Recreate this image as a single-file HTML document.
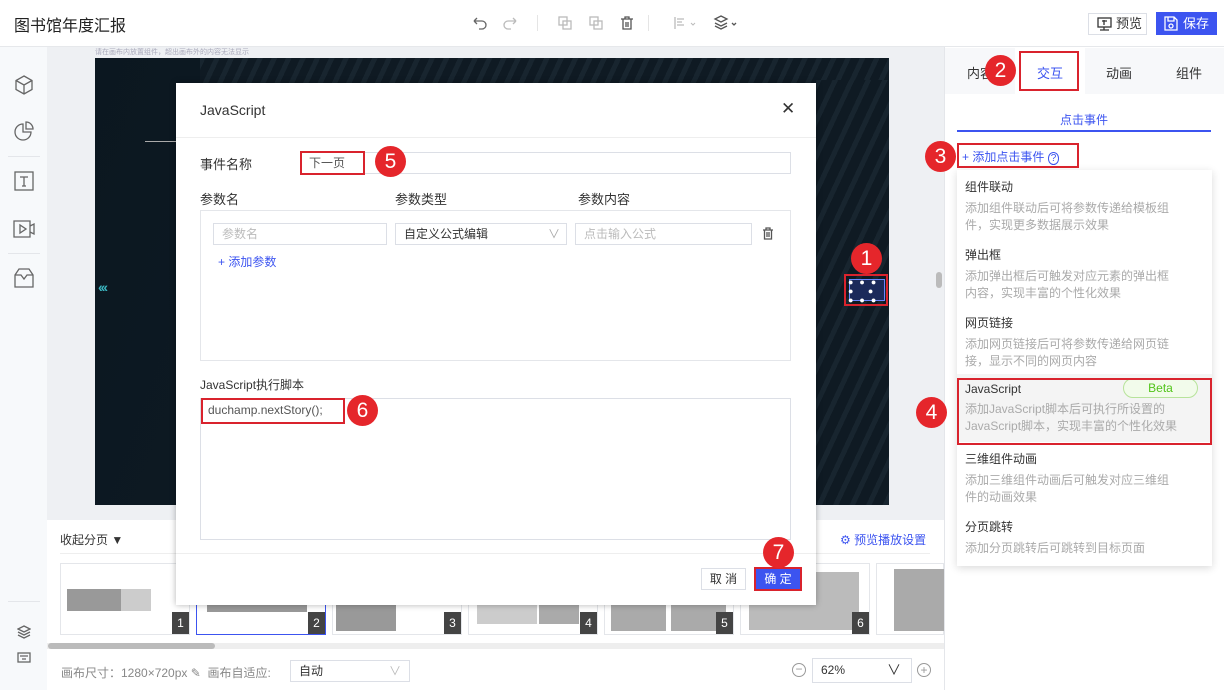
<!DOCTYPE html>
<html><head><meta charset="utf-8"><style>
*{box-sizing:border-box;margin:0;padding:0}
body{width:1224px;height:690px;overflow:hidden;position:relative;font-family:"Liberation Sans","Noto Sans CJK SC",sans-serif;font-size:12px;color:#333;background:#eef0f3}
.a{position:absolute}
.m{position:absolute;width:31px;height:31px;border-radius:50%;background:#e5262b;color:#fff;font-size:21px;text-align:center;line-height:31px;font-family:"Liberation Sans",sans-serif}
.r{position:absolute;border:2px solid #d9232d}
.ic{position:absolute;stroke:#666;fill:none;stroke-width:1.3}
.inp{position:absolute;border:1px solid #dcdfe6;background:#fff;height:22px;line-height:20px;padding-left:8px;color:#bbb;font-size:12px}
.dt{font-size:12px;color:#333;margin-bottom:5px}
.dd{font-size:12px;color:#aaa;line-height:17px}
.it{padding:8px 36px 6px 8px;height:68px}
</style></head><body>
<div class="a" style="left:0;top:0;width:1224px;height:47px;background:#fff;border-bottom:1px solid #e6e8eb"></div>
<div class="a" style="left:14px;top:12px;font-size:16px;color:#222">图书馆年度汇报</div>
<svg class="ic" style="left:470px;top:15px" width="18" height="16"><path d="M4 6h8a4 4 0 010 8H9M4 6l3-3M4 6l3 3"/></svg>
<svg class="ic" style="left:502px;top:15px;stroke:#bbb" width="18" height="16"><path d="M14 6H6a4 4 0 000 8h3M14 6l-3-3M14 6l-3 3"/></svg>
<div class="a" style="left:537px;top:15px;width:1px;height:16px;background:#e5e5e5"></div>
<svg class="ic" style="left:557px;top:15px;stroke:#bbb" width="16" height="16"><rect x="2" y="2" width="8" height="8"/><rect x="6" y="6" width="8" height="8"/></svg>
<svg class="ic" style="left:588px;top:15px;stroke:#bbb" width="16" height="16"><rect x="2" y="2" width="8" height="8"/><rect x="6" y="6" width="8" height="8"/></svg>
<svg class="ic" style="left:619px;top:15px;stroke:#555" width="16" height="16"><path d="M2 4h12M6 4V2h4v2M4 4v10h8V4M7 7v5M9 7v5"/></svg>
<div class="a" style="left:648px;top:15px;width:1px;height:16px;background:#e5e5e5"></div>
<svg class="ic" style="left:672px;top:15px;stroke:#bbb" width="26" height="16"><path d="M3 2v12M5 4h7M5 7h5M5 10h7"/><path d="M19 8l2 2 2-2" stroke-width="1"/></svg>
<svg class="ic" style="left:713px;top:14px;stroke:#555" width="26" height="18"><path d="M8 2l6 3-6 3-6-3zM2 9l6 3 6-3M2 12l6 3 6-3"/><path d="M19 9l2 2 2-2" stroke-width="1.3"/></svg>
<div class="a" style="left:1088px;top:13px;width:59px;height:22px;border:1px solid #dcdfe6;background:#fff;font-size:13px;line-height:20px;padding-left:27px;color:#333">预览</div>
<svg class="ic" style="left:1097px;top:17px;stroke:#333" width="16" height="14"><rect x="1" y="1" width="13" height="9"/><path d="M7 10v3M3 13h9M5 4h5M7 3v5"/></svg>
<div class="a" style="left:1156px;top:12px;width:61px;height:23px;background:#3c54f0;color:#fff;font-size:13px;line-height:23px;padding-left:27px">保存</div>
<svg class="ic" style="left:1164px;top:16px;stroke:#fff" width="14" height="15"><path d="M1 1h9l3 3v10H1z M4 1v4h6V1"/><circle cx="7" cy="10" r="2"/></svg>
<div class="a" style="left:0;top:47px;width:47px;height:643px;background:#f7f9fb"></div>
<div class="a" style="left:8px;top:156px;width:32px;height:1px;background:#e4e6ea"></div>
<div class="a" style="left:8px;top:253px;width:32px;height:1px;background:#e4e6ea"></div>
<div class="a" style="left:8px;top:601px;width:32px;height:1px;background:#e4e6ea"></div>
<svg class="ic" style="left:13px;top:74px" width="22" height="22"><path d="M11 2l8 4.5v9L11 20l-8-4.5v-9zM3 6.5l8 4.5 8-4.5M11 11v9"/></svg>
<svg class="ic" style="left:13px;top:121px" width="22" height="22"><path d="M10 3a8 8 0 108 8h-8z"/><path d="M13 1v7h7a7 7 0 00-7-7z"/></svg>
<svg class="ic" style="left:13px;top:170px" width="22" height="22"><rect x="2" y="2" width="18" height="18"/><path d="M7 7h8M11 7v9M9 16h4"/></svg>
<svg class="ic" style="left:12px;top:218px" width="24" height="22"><path d="M2 3h16v16H2zM18 8l4-2v10l-4-2M8 7v8l6-4z"/></svg>
<svg class="ic" style="left:13px;top:267px" width="22" height="22"><path d="M2 8l4-6h10l4 6v12H2zM2 8h6l3 4 3-4h6"/></svg>
<svg class="ic" style="left:17px;top:625px" width="14" height="14"><path d="M7 1l6 3-6 3-6-3zM1 7l6 3 6-3M1 10l6 3 6-3"/></svg>
<svg class="ic" style="left:17px;top:652px" width="14" height="12"><rect x="1" y="1" width="12" height="9"/><path d="M3 4h8M5 7h4"/></svg>
<div class="a" style="left:95px;top:47px;font-size:7px;color:#aab">请在画布内放置组件，超出画布外的内容无法显示</div>
<div class="a" style="left:95px;top:58px;width:794px;height:447px;background:linear-gradient(110deg,#0b1720 0%,#101c26 60%,#16222d 100%)"></div>
<div class="a" style="left:200px;top:58px;width:689px;height:25px;background:repeating-linear-gradient(115deg,#18252f 0 5px,#0f1a23 5px 13px)"></div>
<div class="a" style="left:816px;top:80px;width:73px;height:425px;background:repeating-linear-gradient(115deg,#18252f 0 5px,#0f1a23 5px 15px)"></div>
<div class="a" style="left:145px;top:141px;width:32px;height:1px;background:#aaa"></div>
<div class="a" style="left:98px;top:279px;color:#3bb5c0;font-size:14px;font-weight:bold;letter-spacing:-2px">‹‹‹</div>
<div class="a" style="left:849px;top:279px;width:36px;height:22px;border:1px solid #6a86ff;background:#1b2a5a"></div>
<div class="a" style="left:848px;top:278px;color:#fff;font-size:9px;line-height:9px;letter-spacing:6px">●●●<br>●&nbsp;●<br>●●●</div>
<div class="a" style="left:936px;top:272px;width:6px;height:16px;background:#bbb;border-radius:3px"></div>
<div class="a" style="left:47px;top:520px;width:897px;height:135px;background:#fff"></div>
<div class="a" style="left:60px;top:531px;font-size:12px;color:#333">收起分页 ▼</div>
<div class="a" style="left:840px;top:531px;font-size:12px;color:#3c54f0">⚙ 预览播放设置</div>
<div class="a" style="left:60px;top:553px;width:870px;height:1px;background:#eee"></div>
<div class="a" style="left:60px;top:563px;width:130px;height:72px;border:1px solid #e4e6ea"><div class="a" style="left:6px;top:25px;width:58px;height:22px;background:#999"></div><div class="a" style="left:60px;top:25px;width:30px;height:22px;background:#ccc"></div><div class="a" style="right:0;bottom:0;width:17px;height:22px;background:#444;color:#fff;text-align:center;line-height:22px">1</div></div>
<div class="a" style="left:196px;top:563px;width:130px;height:72px;border:1px solid #3c54f0"><div class="a" style="left:10px;top:40px;width:100px;height:8px;background:#999"></div><div class="a" style="right:0;bottom:0;width:17px;height:22px;background:#444;color:#fff;text-align:center;line-height:22px">2</div></div>
<div class="a" style="left:332px;top:563px;width:130px;height:72px;border:1px solid #e4e6ea"><div class="a" style="left:3px;top:12px;width:60px;height:55px;background:#999"></div><div class="a" style="left:70px;top:30px;width:40px;height:8px;background:#ccc"></div><div class="a" style="right:0;bottom:0;width:17px;height:22px;background:#444;color:#fff;text-align:center;line-height:22px">3</div></div>
<div class="a" style="left:468px;top:563px;width:130px;height:72px;border:1px solid #e4e6ea"><div class="a" style="left:8px;top:20px;width:60px;height:40px;background:#ccc"></div><div class="a" style="left:70px;top:10px;width:40px;height:50px;background:#aaa"></div><div class="a" style="right:0;bottom:0;width:17px;height:22px;background:#444;color:#fff;text-align:center;line-height:22px">4</div></div>
<div class="a" style="left:604px;top:563px;width:130px;height:72px;border:1px solid #e4e6ea"><div class="a" style="left:6px;top:15px;width:55px;height:52px;background:#aaa"></div><div class="a" style="left:66px;top:15px;width:55px;height:52px;background:#aaa"></div><div class="a" style="right:0;bottom:0;width:17px;height:22px;background:#444;color:#fff;text-align:center;line-height:22px">5</div></div>
<div class="a" style="left:740px;top:563px;width:130px;height:72px;border:1px solid #e4e6ea"><div class="a" style="left:8px;top:8px;width:110px;height:58px;background:#bbb"></div><div class="a" style="right:0;bottom:0;width:17px;height:22px;background:#444;color:#fff;text-align:center;line-height:22px">6</div></div>
<div class="a" style="left:876px;top:563px;width:68px;height:72px;border:1px solid #e4e6ea"><div class="a" style="left:17px;top:5px;width:51px;height:62px;background:#aaa"></div></div>
<div class="a" style="left:47px;top:643px;width:897px;height:6px;background:#eee"></div>
<div class="a" style="left:48px;top:643px;width:167px;height:6px;background:#bbb;border-radius:3px"></div>
<div class="a" style="left:47px;top:653px;width:897px;height:37px;background:#fff"></div>
<div class="a" style="left:61px;top:664px;color:#888;font-size:12px">画布尺寸：1280×720px ✎&nbsp;&nbsp;画布自适应:</div>
<div class="a" style="left:290px;top:660px;width:120px;height:22px;border:1px solid #dcdfe6;padding-left:8px;line-height:20px;color:#333">自动<span style="position:absolute;right:8px;color:#bbb">∨</span></div>
<div class="a" style="left:792px;top:663px;width:14px;height:14px;border:1px solid #999;border-radius:50%;text-align:center;line-height:11px;color:#999">−</div>
<div class="a" style="left:812px;top:658px;width:100px;height:25px;border:1px solid #dcdfe6;padding-left:8px;line-height:23px;color:#333">62%<span style="position:absolute;right:10px;font-size:14px">∨</span></div>
<div class="a" style="left:917px;top:663px;width:14px;height:14px;border:1px solid #999;border-radius:50%;text-align:center;line-height:12px;color:#999">+</div>
<div class="a" style="left:944px;top:47px;width:280px;height:643px;background:#fff;border-left:1px solid #e4e6ea"></div>
<div class="a" style="left:945px;top:48px;width:279px;height:46px;background:#f7f8fa"></div>
<div class="a" style="left:1015px;top:48px;width:70px;height:46px;background:#fff"></div>
<div class="a" style="left:967px;top:63px;font-size:13px;color:#333">内容</div>
<div class="a" style="left:1037px;top:63px;font-size:13px;color:#3c54f0">交互</div>
<div class="a" style="left:1106px;top:63px;font-size:13px;color:#333">动画</div>
<div class="a" style="left:1176px;top:63px;font-size:13px;color:#333">组件</div>
<div class="a" style="left:1060px;top:111px;font-size:12px;color:#3c54f0">点击事件</div>
<div class="a" style="left:957px;top:130px;width:254px;height:2px;background:#3c54f0"></div>
<div class="a" style="left:962px;top:148px;font-size:12px;color:#3c54f0">+ 添加点击事件 <span style="font-size:10px;border:1px solid #3c54f0;border-radius:50%;padding:0 2px">?</span></div>
<div class="a" style="left:957px;top:170px;width:255px;height:396px;background:#fff;box-shadow:0 2px 8px rgba(0,0,0,.15)">
<div class="it"><div class="dt">组件联动</div><div class="dd">添加组件联动后可将参数传递给模板组件，实现更多数据展示效果</div></div>
<div class="it"><div class="dt">弹出框</div><div class="dd">添加弹出框后可触发对应元素的弹出框内容，实现丰富的个性化效果</div></div>
<div class="it"><div class="dt">网页链接</div><div class="dd">添加网页链接后可将参数传递给网页链接，显示不同的网页内容</div></div>
<div class="it" style="background:#f4f4f4;position:relative;padding-right:8px"><div class="dt">JavaScript</div><div class="dd">添加JavaScript脚本后可执行所设置的<br>JavaScript脚本，实现丰富的个性化效果</div><div class="a" style="left:166px;top:4px;width:75px;height:20px;border:1px solid #b7e39a;background:#f2fbeb;border-radius:10px;color:#52c41a;text-align:center;line-height:18px;font-size:12px">Beta</div></div>
<div class="it"><div class="dt">三维组件动画</div><div class="dd">添加三维组件动画后可触发对应三维组件的动画效果</div></div>
<div class="it"><div class="dt">分页跳转</div><div class="dd">添加分页跳转后可跳转到目标页面</div></div>
</div>
<div class="a" style="left:176px;top:83px;width:640px;height:522px;background:#fff;box-shadow:0 0 6px rgba(0,0,0,.3)"></div>
<div class="a" style="left:200px;top:102px;font-size:14px;color:#333">JavaScript</div>
<div class="a" style="left:781px;top:99px;font-size:17px;color:#333">✕</div>
<div class="a" style="left:176px;top:137px;width:640px;height:1px;background:#eee"></div>
<div class="a" style="left:200px;top:154px;font-size:13px;color:#333">事件名称</div>
<div class="inp" style="left:300px;top:152px;width:491px;color:#555">下一页</div>
<div class="a" style="left:200px;top:189px;font-size:13px;color:#333">参数名</div>
<div class="a" style="left:395px;top:189px;font-size:13px;color:#333">参数类型</div>
<div class="a" style="left:578px;top:189px;font-size:13px;color:#333">参数内容</div>
<div class="a" style="left:200px;top:210px;width:591px;height:151px;border:1px solid #e4e6ea"></div>
<div class="inp" style="left:213px;top:223px;width:174px">参数名</div>
<div class="inp" style="left:395px;top:223px;width:172px;color:#333">自定义公式编辑<span style="position:absolute;right:6px;color:#aaa">∨</span></div>
<div class="inp" style="left:575px;top:223px;width:177px">点击输入公式</div>
<svg class="ic" style="left:762px;top:227px;stroke:#555" width="12" height="13"><path d="M1 3h10M4 3V1h4v2M2.5 3v9h7V3M5 5v5M7 5v5"/></svg>
<div class="a" style="left:218px;top:253px;font-size:12px;color:#3c54f0">+ 添加参数</div>
<div class="a" style="left:200px;top:376px;font-size:12px;color:#333">JavaScript执行脚本</div>
<div class="a" style="left:200px;top:398px;width:591px;height:142px;border:1px solid #dcdfe6"></div>
<div class="a" style="left:208px;top:403px;font-size:12px;color:#555">duchamp.nextStory();</div>
<div class="a" style="left:176px;top:553px;width:640px;height:1px;background:#eee"></div>
<div class="a" style="left:701px;top:568px;width:45px;height:22px;border:1px solid #dcdfe6;text-align:center;line-height:20px;font-size:12px">取 消</div>
<div class="a" style="left:755px;top:568px;width:46px;height:22px;background:#3c54f0;color:#fff;text-align:center;line-height:22px;font-size:12px">确 定</div>
<div class="r" style="left:844px;top:274px;width:44px;height:32px"></div>
<div class="r" style="left:1019px;top:51px;width:60px;height:40px"></div>
<div class="r" style="left:957px;top:143px;width:122px;height:25px"></div>
<div class="r" style="left:957px;top:378px;width:255px;height:67px"></div>
<div class="r" style="left:300px;top:151px;width:65px;height:24px"></div>
<div class="r" style="left:201px;top:398px;width:144px;height:26px"></div>
<div class="r" style="left:754px;top:567px;width:48px;height:24px"></div>
<div class="m" style="left:851px;top:243px">1</div>
<div class="m" style="left:985px;top:55px">2</div>
<div class="m" style="left:925px;top:141px">3</div>
<div class="m" style="left:916px;top:397px">4</div>
<div class="m" style="left:375px;top:146px">5</div>
<div class="m" style="left:347px;top:395px">6</div>
<div class="m" style="left:763px;top:537px">7</div>
</body></html>
